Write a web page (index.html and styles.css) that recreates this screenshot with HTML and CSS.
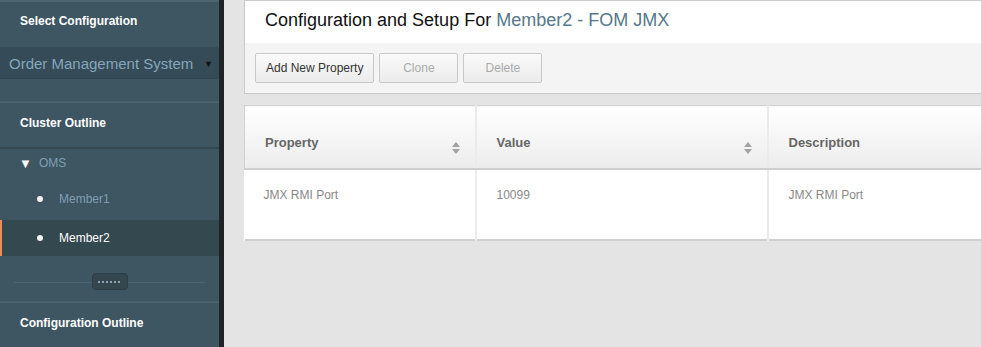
FILE: index.html
```html
<!DOCTYPE html>
<html lang="en">
<head>
  <meta charset="UTF-8">
  <title>Configuration and Setup</title>
  <link rel="stylesheet" href="styles.css">
</head>
<body>
  <div class="layout">
    <!-- Left navigation -->
    <aside class="sidebar">
      <div class="side-head">Select Configuration</div>
      <div class="select-box">
        <span>Order Management System</span>
        <span class="caret">&#9660;</span>
      </div>
      <div class="side-head bordered">Cluster Outline</div>
      <ul class="tree">
        <li class="tree-node"><span class="tri">&#9660;</span>OMS</li>
        <li class="tree-leaf first">Member1</li>
        <li class="tree-leaf active">Member2</li>
      </ul>
      <div class="splitter">
        <span class="grip"></span>
      </div>
      <div class="side-head bordered">Configuration Outline</div>
    </aside>
    <div class="gutter"></div>

    <!-- Main content -->
    <main class="content">
      <div class="panel">
        <h1 class="title">Configuration and Setup For <span class="accent">Member2 - FOM JMX</span></h1>
        <div class="toolbar">
          <button class="btn">Add New Property</button>
          <button class="btn" disabled>Clone</button>
          <button class="btn" disabled>Delete</button>
        </div>
      </div>

      <table class="grid">
        <colgroup>
          <col class="c1"><col class="c2"><col>
        </colgroup>
        <thead>
          <tr>
            <th>Property <span class="sort"></span></th>
            <th>Value <span class="sort"></span></th>
            <th>Description</th>
          </tr>
        </thead>
        <tbody>
          <tr>
            <td>JMX RMI Port</td>
            <td>10099</td>
            <td>JMX RMI Port</td>
          </tr>
        </tbody>
      </table>
    </main>
  </div>
</body>
</html>
```
FILE: styles.css
```css
* {
  margin: 0;
  padding: 0;
  box-sizing: border-box;
}

body {
  font-family: "Liberation Sans", Arial, sans-serif;
  background: #e4e4e4;
  height: 347px;
  overflow: hidden;
}

.layout {
  display: flex;
  height: 347px;
}

/* Sidebar */
.sidebar {
  width: 219px;
  background: #3e5562;
  border-top: 2px solid #4c6572;
  flex-shrink: 0;
}

.gutter {
  width: 5px;
  background: #202425;
}

.side-head {
  height: 44px;
  padding: 12px 20px 0;
  color: #fff;
  font-weight: bold;
  font-size: 12px;
}

.side-head.bordered {
  height: 46px;
  border-top: 2px solid #4a6270;
  padding-top: 13px;
}

.select-box {
  display: flex;
  justify-content: space-between;
  align-items: center;
  height: 32px;
  margin-top: 1px;
  padding: 2px 6px 0 9px;
  background: #354b57;
  border-bottom: 1px solid #2f434e;
  border-radius: 0 3px 3px 0;
  color: #86a6ba;
  font-size: 15px;
}

.caret {
  color: #111;
  font-size: 9px;
}

.select-box + .side-head {
  margin-top: 22px;
}

.tree {
  list-style: none;
  border-top: 2px solid #34494f;
}

.tree li {
  height: 36px;
  display: flex;
  align-items: center;
  font-size: 12px;
  color: #7e9fb2;
}

.tree li.tree-node {
  height: 28px;
  padding-left: 19px;
}

.tree li.first {
  height: 43px;
  padding-top: 1px;
}

.tri {
  color: #fff;
  font-size: 13px;
  margin-right: 7px;
}

.tree-leaf {
  padding-left: 37px;
}

.tree-leaf::before {
  content: '';
  width: 6px;
  height: 6px;
  border-radius: 50%;
  background: #f2f2f2;
  margin-right: 16px;
}

.tree-leaf.active {
  background: #34484f;
  border-left: 2px solid #f08a57;
  padding-left: 35px;
  color: #fff;
}

.splitter {
  height: 45px;
  display: flex;
  align-items: center;
  justify-content: center;
  padding-top: 6px;
  margin: 0 14px;
  background: linear-gradient(#4d6572, #4d6572) 0 26px / 100% 1px no-repeat;
}

.grip {
  width: 36px;
  height: 17px;
  border-radius: 4px;
  background:
    radial-gradient(circle, #8ea4b1 0.9px, transparent 1.2px) 0 5px / 4px 6px repeat-x,
    #34474f;
  background-clip: content-box, border-box;
  border: 1px solid #2c3e46;
  padding: 0 5px;
}

/* Main area */
.content {
  flex: 1;
  padding: 0 0 0 20px;
}

.panel {
  border: 1px solid #cbcbcb;
  border-right: none;
  height: 94px;
  background: #f4f4f4;
}

.title {
  height: 42px;
  background: #fff;
  font-size: 18px;
  font-weight: normal;
  color: #111;
  padding: 9px 0 0 20px;
}

.accent {
  color: #56788a;
}

.toolbar {
  display: flex;
  gap: 5px;
  padding: 10px 0 0 10px;
}

.btn {
  height: 30px;
  padding: 0 10px;
  font-family: "Liberation Sans", Arial, sans-serif;
  font-size: 12px;
  color: #333;
  background: linear-gradient(#fafafa, #ececec);
  border: 1px solid #c8c8c8;
  border-radius: 2px;
}

.btn:disabled {
  color: #aaa;
  width: 79px;
}

/* Table */
.grid {
  width: 100%;
  table-layout: fixed;
  margin-top: 11px;
  border-collapse: collapse;
  background: #fff;
  border-top: 1px solid #d4d4d4;
  border-bottom: 2px solid #d0d0d0;
}

.c1 { width: 231px; }
.c2 { width: 292px; }

.grid th {
  height: 63px;
  text-align: left;
  font-size: 13px;
  color: #666;
  padding: 12px 20px 0 20px;
  background: linear-gradient(#fff, #ececec);
  border-bottom: 2px solid #cfcfcf;
  border-right: 2px solid #ebebeb;
  position: relative;
}

.grid th:first-child {
  border-left: 1px solid #d0d0d0;
}

.grid td {
  height: 71px;
  vertical-align: top;
  padding: 18px 20px 0 20px;
  font-size: 12px;
  color: #888;
  border-right: 2px solid #ebebeb;
}

.grid th:last-child,
.grid td:last-child {
  border-right: none;
}

.grid td:first-child {
  padding-left: 19px;
}

.sort {
  position: absolute;
  right: 15px;
  top: 36px;
  width: 8px;
  height: 12px;
}

.sort::before,
.sort::after {
  content: '';
  position: absolute;
  left: 0;
  border-left: 4px solid transparent;
  border-right: 4px solid transparent;
}

.sort::before {
  top: 0;
  border-bottom: 5px solid #a2a2a2;
}

.sort::after {
  bottom: 0;
  border-top: 5px solid #a2a2a2;
}
```
